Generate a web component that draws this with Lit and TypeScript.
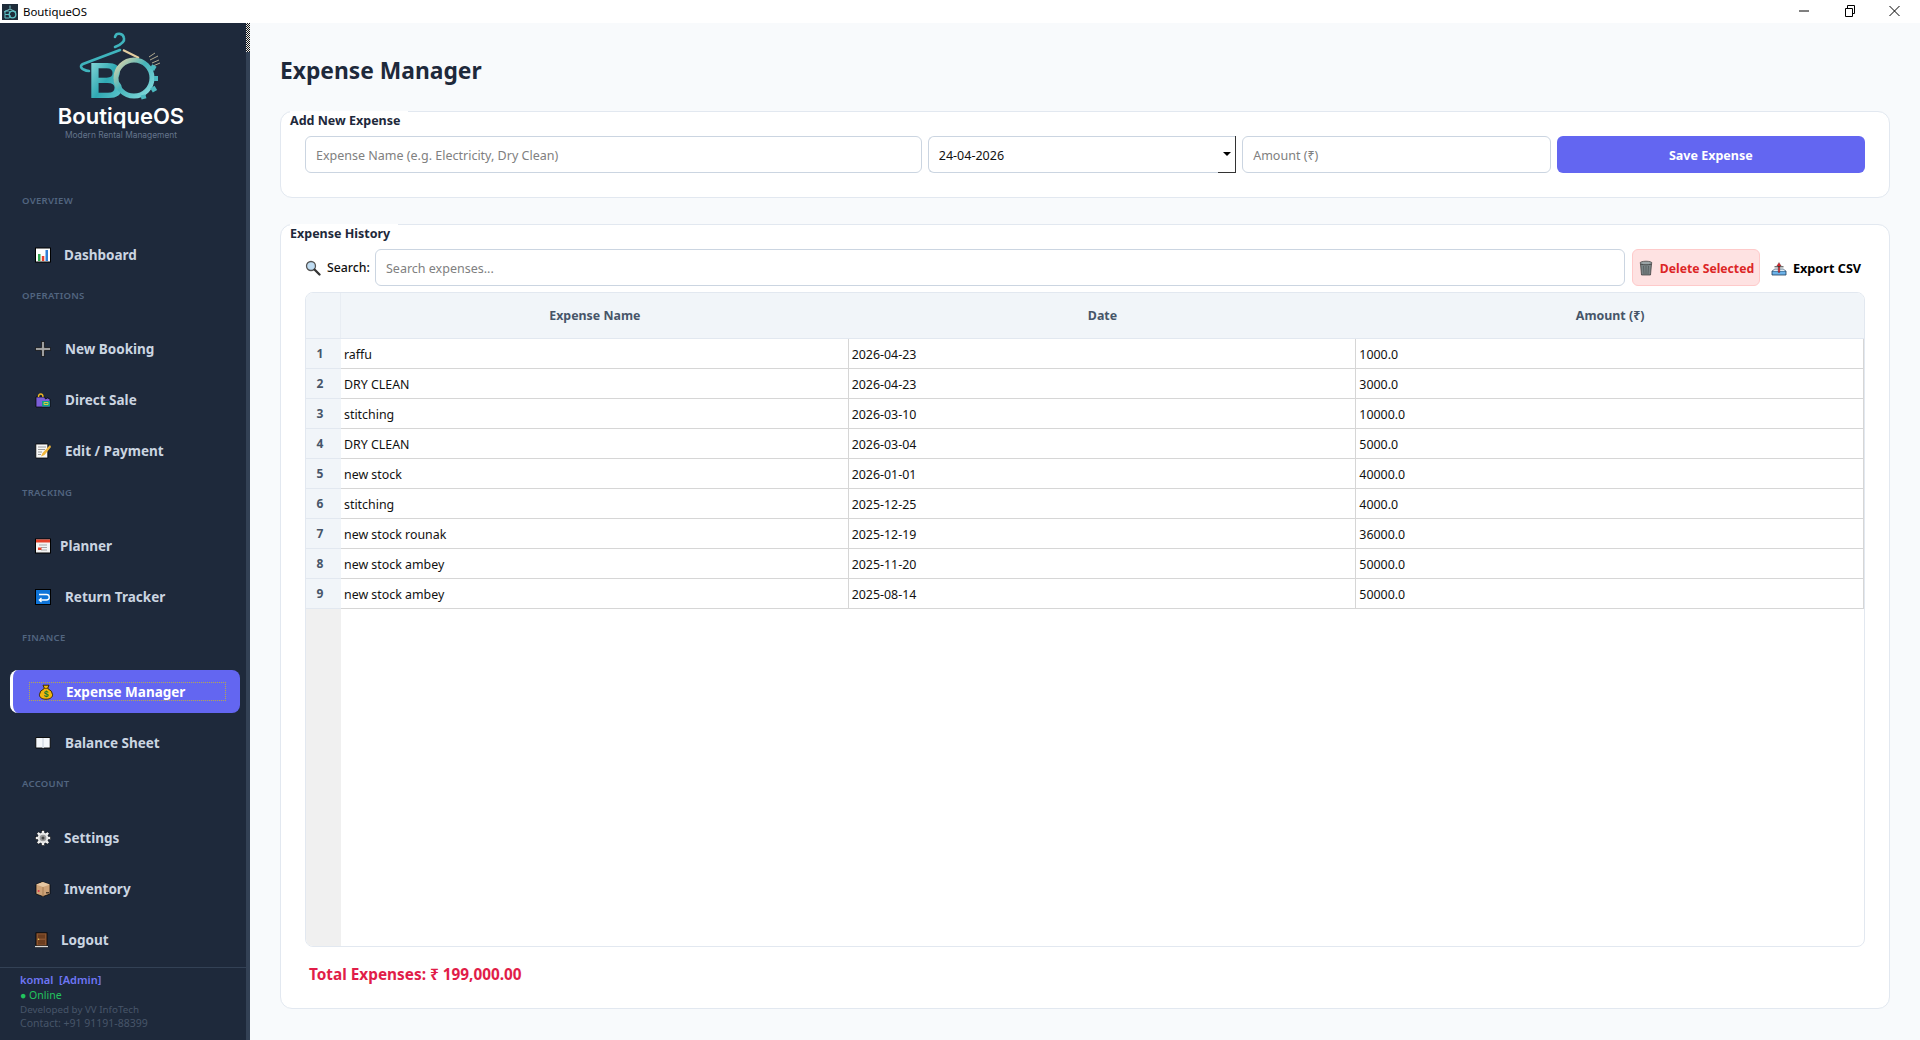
import { LitElement, css, html, svg } from "lit";
import { customElement } from "lit/decorators.js";

const icons: Record<string, unknown> = {
  chart: svg`<rect x=".5" y="1" width="15" height="14" fill="#fff" stroke="#000"/><rect x="3" y="7" width="2.5" height="7" fill="#2fa84f"/><rect x="6.8" y="9" width="2.5" height="5" fill="#e5432d"/><rect x="10.5" y="3" width="2.5" height="11" fill="#2f7fd6"/>`,
  plus: svg`<path d="M6.500.5h3v6h6v3h-6v6h-3v-6h-6v-3h6z" fill="#8f8f8f" stroke="#000" stroke-width=".6"/><path d="M1 8h14M8 1v14" stroke="#b5b5b5" stroke-width=".8"/>`,
  bag: svg`<path d="M1 5h8.500l1 2 2-1 2.500 1v8H1z" fill="#7b5fd8" stroke="#000" stroke-width=".7"/><path d="M3.500 5C3.500 1 8 1 8 5" fill="none" stroke="#e8b321" stroke-width="1.400"/><rect x="7" y="9" width="8" height="5.500" fill="#0f9d8a"/><path d="M9 10.500h4v2H9z" fill="none" stroke="#e6d23b" stroke-width=".9"/>`,
  memo: svg`<path d="M.8 1h12v14H.8z" fill="#f7f7f7" stroke="#000" stroke-width=".8"/><path d="M3 4h8M3 6.500h7M3 9h4M3 11.500h3" stroke="#9a9a9a" stroke-width="1"/><path d="M15 2 7.500 10l-1.500 3.500L9.500 12 16 4z" fill="#f0b63c"/>`,
  calendar: svg`<rect x=".5" y="1" width="15" height="14" fill="#f4f4f4" stroke="#000"/><rect x="1" y="1.500" width="14" height="3" fill="#e5402a"/><path d="M4 7h8M6 9.500h6M6 12h6" stroke="#a8a8a8"/><rect x="3" y="9.500" width="3.500" height="2.500" fill="#e5402a"/>`,
  ret: svg`<rect x=".5" y=".5" width="15" height="15" fill="#0f74d8" stroke="#000"/><path d="M4 5.500h7.500a2.500 2.500 0 0 1 0 5.500H4.500M6.500 9 4.300 11l2.200 2" fill="none" stroke="#fff" stroke-width="1.300"/>`,
  money: svg`<path d="M5 1.200h6l-1.400 3.200q5 2.500 5 6.300c0 3-3 4.500-6.600 4.500S1.400 13.700 1.400 10.700q0-3.800 5-6.300z" fill="#f2b70f" stroke="#2b1d00" stroke-width=".9"/><path d="M5.500 4.400h5" stroke="#7a5200" stroke-width="1"/><text x="8" y="13.200" text-anchor="middle" font-size="8.500" font-weight="700" font-family="Liberation Sans, sans-serif" fill="#157a2c">$</text>`,
  book: svg`<path d="M.8 2.500h14.400v10.500H8.800l-.8.800-.8-.8H.8z" fill="#f3f6fa" stroke="#000" stroke-width=".9"/><path d="M8 3v10" stroke="#b8c4d0" stroke-width=".8"/>`,
  gear: svg`<g transform="translate(8 8)"><g fill="#f2f2f2" stroke="#000" stroke-width=".5"><rect x="-1.500" y="-7.500" width="3" height="15"/><rect x="-1.500" y="-7.500" width="3" height="15" transform="rotate(45)"/><rect x="-1.500" y="-7.500" width="3" height="15" transform="rotate(90)"/><rect x="-1.500" y="-7.500" width="3" height="15" transform="rotate(135)"/></g><circle r="5.400" fill="#e6e6e6"/><circle r="3.300" fill="#9a9a9a"/><circle r="1.500" fill="#444"/></g>`,
  box: svg`<path d="M1 3.500 7 .8l8 2.700v9.500l-7 2.500L1 13z" fill="#cda277" stroke="#000" stroke-width=".7"/><path d="M1 3.500 8 6l7-2.500L8 1z" fill="#e6c7a2"/><path d="M8 6v9.500" stroke="#a67c52"/><circle cx="3.600" cy="10" r="1" fill="#e0364a"/><rect x="11" y="11" width="3" height="1.500" fill="#4a3a2a"/>`,
  door: svg`<rect x="1" y=".8" width="11" height="13.400" fill="#8a5430" stroke="#000" stroke-width=".8"/><rect x="3" y="2.500" width="7" height="4" fill="#6b3d1f"/><rect x="3" y="8" width="7" height="4.500" fill="#6b3d1f"/><circle cx="3.500" cy="7.300" r=".8" fill="#f0cf5a"/><rect x="0" y="13.800" width="13" height="1.600" fill="#d8d8d8" stroke="#000" stroke-width=".4"/>`,
  search: svg`<circle cx="6" cy="6" r="4.500" fill="#bfdcf2" stroke="#555" stroke-width="1.300"/><path d="m9.500 9.500 5 5" stroke="#333" stroke-width="2.300" stroke-linecap="round"/>`,
  trash: svg`<path d="M2.500 4h11l-1 11h-9z" fill="#7a8486" stroke="#333" stroke-width=".7"/><ellipse cx="8" cy="3" rx="6" ry="1.800" fill="#9aa4a6" stroke="#333" stroke-width=".7"/><path d="M5.500 6l.5 8M8 6v8M10.500 6l-.5 8" stroke="#4a5355" stroke-width=".7"/>`,
  export: svg`<path d="M1 11h14v4H1z" fill="#6cb2e8" stroke="#1d3d5c" stroke-width=".8"/><path d="M1.500 11 3.500 9h9l2 2" fill="#dfeaf2" stroke="#1d3d5c" stroke-width=".6"/><path d="M8 2.500 5.800 6H7.200v6.500h1.600V6h1.400z" fill="#e1262d" stroke="#222" stroke-width=".3"/><path d="M3.500 6.800h9" stroke="#222" stroke-width=".9"/>`,
};

const icon = (name: string) => html`<svg class="ico" viewBox="0 0 16 16">${icons[name]}</svg>`;

const nav = [
  { label: "OVERVIEW", items: [{ text: "Dashboard", icon: "chart", gap: 13 }] },
  {
    label: "OPERATIONS",
    items: [
      { text: "New Booking", icon: "plus", gap: 14 },
      { text: "Direct Sale", icon: "bag", gap: 14 },
      { text: "Edit / Payment", icon: "memo", gap: 14 },
    ],
  },
  {
    label: "TRACKING",
    items: [
      { text: "Planner", icon: "calendar", gap: 9 },
      { text: "Return Tracker", icon: "ret", gap: 14 },
    ],
  },
  {
    label: "FINANCE",
    items: [
      { text: "Expense Manager", icon: "money", gap: 12, active: true },
      { text: "Balance Sheet", icon: "book", gap: 14 },
    ],
  },
  {
    label: "ACCOUNT",
    items: [
      { text: "Settings", icon: "gear", gap: 13 },
      { text: "Inventory", icon: "box", gap: 13 },
      { text: "Logout", icon: "door", gap: 10 },
    ],
  },
];

const rows = [
  ["raffu", "2026-04-23", "1000.0"],
  ["DRY CLEAN", "2026-04-23", "3000.0"],
  ["stitching", "2026-03-10", "10000.0"],
  ["DRY CLEAN", "2026-03-04", "5000.0"],
  ["new stock", "2026-01-01", "40000.0"],
  ["stitching", "2025-12-25", "4000.0"],
  ["new stock rounak", "2025-12-19", "36000.0"],
  ["new stock ambey", "2025-11-20", "50000.0"],
  ["new stock ambey", "2025-08-14", "50000.0"],
];

@customElement("app-root")
export class AppRoot extends LitElement {
  static styles = css`
    :host {
      display: flex;
      flex-direction: column;
      height: 1040px;
      font-family: "Noto Sans", "Open Sans", sans-serif;
      color: #0f172a;
      background: #f8fafc;
      overflow: hidden;
    }
    .ico {
      width: 16px;
      height: 16px;
      flex: none;
    }

    .titlebar {
      height: 23px;
      flex: none;
      background: #fff;
      display: flex;
      align-items: center;
      font-size: 11.400px;
      color: #000;
      padding-left: 2px;
    }
    .app-icon {
      width: 16px;
      height: 16px;
      margin-right: 5px;
      flex: none;
    }
    .win {
      margin-left: auto;
      display: flex;
      padding-right: 3px;
    }
    .win svg {
      width: 45px;
      height: 20px;
      display: block;
    }

    .body {
      flex: 1;
      display: flex;
      min-height: 0;
    }

    .sidebar {
      width: 250px;
      flex: none;
      display: flex;
      background: #1e293b;
    }
    .side-col {
      width: 246px;
      display: flex;
      flex-direction: column;
    }
    .scroll {
      width: 4px;
      background: #334155;
    }
    .scroll div {
      height: 29px;
      background: repeating-conic-gradient(#111 0 25%, #eee 0 50%) 0 0 / 2px 2px;
    }

    .brand {
      height: 168px;
      flex: none;
      display: flex;
      flex-direction: column;
      align-items: center;
    }
    .logo {
      width: 90px;
      height: 82px;
      margin: 7px 6px -7px 0;
      display: block;
    }
    .brand-name {
      font-family: Inter, sans-serif;
      font-weight: 600;
      font-size: 22px;
      line-height: 16px;
      color: #fff;
      margin: 3px 4px 0 0;
    }
    .brand-tag {
      font-family: Inter, sans-serif;
      font-size: 8.400px;
      line-height: 11px;
      color: #64748b;
      margin: 6px 4px 0 0;
    }

    .section + .section {
      margin-top: 9.750px;
    }
    .section-label {
      height: 20px;
      line-height: 20px;
      font-size: 9.500px;
      font-weight: 600;
      letter-spacing: 0.3px;
      color: #526580;
      padding-left: 22px;
      margin-bottom: 22px;
    }
    .items {
      display: flex;
      flex-direction: column;
      gap: 8px;
    }
    .item {
      position: relative;
      height: 43px;
      margin: 0 6px 0 10px;
      padding-left: 25px;
      display: flex;
      align-items: center;
      box-sizing: border-box;
      font-size: 13.500px;
      font-weight: 700;
      color: #cbd5e1;
      border-radius: 8px;
    }
    .item.active {
      background: #6366f1;
      color: #fff;
      border-left: 3px solid #fff;
      padding-left: 25px;
    }
    .item.active::after {
      content: "";
      position: absolute;
      left: 16px;
      right: 14px;
      top: 12px;
      bottom: 12px;
      border: 1px dotted #b7a94e;
    }

    .foot {
      margin-top: auto;
      height: 73px;
      flex: none;
      box-sizing: border-box;
      border-top: 1px solid #334155;
      padding: 4px 0 0 20px;
      font-size: 10.500px;
      line-height: 15px;
      color: #475569;
    }
    .foot .user {
      font-size: 11px;
      line-height: 16px;
      color: #6f76f5;
      font-weight: 600;
      white-space: pre;
    }
    .foot .online {
      color: #22c55e;
    }
    .foot .dev {
      font-size: 9.800px;
      line-height: 14px;
    }
    .foot .contact {
      font-size: 10.500px;
      line-height: 13px;
    }

    .main {
      flex: 1;
      min-width: 0;
      box-sizing: border-box;
      padding: 32px 30px 31px;
      display: flex;
      flex-direction: column;
    }
    h1 {
      margin: 0 0 24px;
      height: 32px;
      line-height: 32px;
      font-size: 22.800px;
      font-weight: 700;
      color: #1e293b;
    }
    .card {
      background: #fff;
      border: 1px solid #e2e8f0;
      border-radius: 12px;
      padding: 0 24px;
      display: flex;
      flex-direction: column;
    }
    .card + .card {
      margin-top: 26px;
      flex: 1;
      min-height: 0;
    }
    .legend {
      align-self: flex-start;
      margin: -1px 0 7px -15px;
      height: 18px;
      line-height: 19px;
      padding: 0 8px 0 0;
      background: #fff;
      font-size: 12.500px;
      font-weight: 700;
      color: #1e293b;
    }
    .add-row {
      display: grid;
      grid-template-columns: 2fr 1fr 1fr 1fr;
      gap: 6px;
      height: 37px;
      margin-bottom: 24px;
    }
    input {
      box-sizing: border-box;
      width: 100%;
      height: 100%;
      border: 1px solid #cbd5e1;
      border-radius: 6px;
      background: #fff;
      padding: 2px 10px 0;
      font: 12.500px "Noto Sans", sans-serif;
      color: #111;
      outline: none;
    }
    input::placeholder {
      color: #808080;
      opacity: 1;
    }
    .date {
      position: relative;
    }
    .date input {
      border-radius: 6px 0 0 6px;
      border-right-color: #222;
      border-bottom-color: #cbd5e1;
    }
    .date-btn {
      position: absolute;
      right: 0;
      top: 0;
      bottom: 0;
      width: 18px;
      border-right: 1px solid #333;
      border-bottom: 1px solid #333;
      box-sizing: border-box;
      display: flex;
      align-items: center;
      justify-content: center;
    }
    .date-btn::before {
      content: "";
      border: 4px solid transparent;
      border-top: 4px solid #000;
      margin-top: 4px;
    }
    .save {
      border: 0;
      border-radius: 6px;
      background: #6366f1;
      color: #fff;
      padding-top: 2px;
      font: 700 12.500px "Noto Sans", sans-serif;
    }

    .search-row {
      display: flex;
      align-items: center;
      height: 37px;
      flex: none;
      margin-bottom: 6px;
    }
    .search-lab {
      display: flex;
      align-items: center;
      gap: 6px;
      font-size: 12.300px;
      font-weight: 500;
      width: 70px;
      flex: none;
      color: #111;
    }
    .search-box {
      flex: 1;
      height: 100%;
    }
    .del {
      margin-left: 7px;
      height: 100%;
      width: 128px;
      box-sizing: border-box;
      flex: none;
      border: 1px solid #fecaca;
      border-radius: 6px;
      background: #fee2e2;
      color: #dc2626;
      font-size: 12.200px;
      font-weight: 700;
      display: flex;
      align-items: center;
      justify-content: center;
      gap: 6px;
    }
    .del span {
      padding-top: 1px;
    }
    .exp {
      width: 105px;
      box-sizing: border-box;
      padding-left: 7px;
      flex: none;
      display: flex;
      align-items: center;
      justify-content: center;
      gap: 6px;
      font-size: 12.700px;
      font-weight: 700;
      color: #000;
    }

    .table {
      flex: 1;
      min-height: 0;
      display: flex;
      flex-direction: column;
      border: 1px solid #e2e8f0;
      border-radius: 8px;
      overflow: hidden;
      background: #fff;
    }
    .tr {
      display: grid;
      grid-template-columns: 35px 1fr 1fr 1fr;
      flex: none;
      height: 30px;
    }
    .tr.head {
      height: 46px;
      background: #f1f5f9;
      border-bottom: 1px solid #e2e8f0;
      box-sizing: border-box;
    }
    .th {
      display: flex;
      align-items: center;
      justify-content: center;
      font-size: 12.400px;
      font-weight: 700;
      color: #475569;
    }
    .th.corner {
      border-right: 1px solid #e8edf3;
    }
    .num {
      background: #f1f5f9;
      box-sizing: border-box;
      padding-right: 7px;
      display: flex;
      align-items: center;
      justify-content: center;
      font-size: 12px;
      font-weight: 700;
      color: #475569;
      border-bottom: 1px solid #e2e8f0;
    }
    .td {
      display: flex;
      align-items: center;
      padding: 1px 0 0 3px;
      font-size: 12.400px;
      color: #111;
      border-right: 1px solid #d6d6d6;
      border-bottom: 1px solid #d6d6d6;
      box-sizing: border-box;
    }
    .filler {
      flex: 1;
      display: flex;
    }
    .filler div {
      width: 35px;
      background: #f0f0f0;
    }
    .total {
      flex: none;
      height: 22px;
      line-height: 22px;
      margin: 16px 0 23px 4px;
      font-size: 15.350px;
      font-weight: 700;
      color: #e11d48;
    }
  `;

  renderLogo() {
    return html`<svg class="logo" viewBox="76 30 90 82">
      <defs>
        <linearGradient id="teal" x1="0" y1="0" x2="1" y2="1">
          <stop offset="0" stop-color="#9fe4e2" />
          <stop offset="0.5" stop-color="#2fa9b3" />
          <stop offset="1" stop-color="#6fd0d4" />
        </linearGradient>
        <linearGradient id="ring" x1="0" y1="0" x2="1" y2="1">
          <stop offset="0" stop-color="#e9d6a8" />
          <stop offset="0.45" stop-color="#45b4ba" />
          <stop offset="1" stop-color="#8adde0" />
        </linearGradient>
      </defs>
      <path
        d="M116 47c5-2 10-5 9-9-1-5-8-6-9-1M121 50 84 64c-4 2-2 6 6 7"
        fill="none"
        stroke="#3fb4bd"
        stroke-width="2.600"
        stroke-linecap="round"
      />
      <path d="M124 50l16 8" stroke="#e3cda0" stroke-width="2" />
      <path
        d="M150 57l6-4M151 60l8-4M153 63l7-3M154 66l7-3"
        stroke="#d8cca6"
        stroke-width="0.800"
      />
      <text
        x="89"
        y="98"
        font-family="Liberation Sans, sans-serif"
        font-weight="700"
        font-size="50"
        fill="url(#teal)"
      >B</text>
      <circle cx="135" cy="78" r="18" fill="none" stroke="url(#ring)" stroke-width="5" />
      <g fill="#4cb9c0">
        <rect x="152" y="65" width="5" height="5" transform="rotate(30 154 67)" />
        <rect x="155" y="76" width="4" height="5" />
        <rect x="152" y="87" width="5" height="5" transform="rotate(-30 154 89)" />
        <rect x="142" y="95" width="5" height="4" transform="rotate(-15 144 97)" />
      </g>
    </svg>`;
  }

  renderSidebar() {
    return html`<aside class="sidebar">
      <div class="side-col">
        <div class="brand">
          ${this.renderLogo()}
          <div class="brand-name">BoutiqueOS</div>
          <div class="brand-tag">Modern Rental Management</div>
        </div>
        ${nav.map(
          (s) => html`<div class="section">
            <div class="section-label">${s.label}</div>
            <div class="items">
              ${s.items.map(
                (i) => html`<div class="item ${i.active ? "active" : ""}" style="gap:${i.gap}px">
                  ${icon(i.icon)}<span>${i.text}</span>
                </div>`
              )}
            </div>
          </div>`
        )}
        <div class="foot">
          <div class="user">komal  [Admin]</div>
          <div class="online">● Online</div>
          <div class="dev">Developed by VV InfoTech</div>
          <div class="contact">Contact: +91 91191-88399</div>
        </div>
      </div>
      <div class="scroll"><div></div></div>
    </aside>`;
  }

  render() {
    return html`
      <div class="titlebar">
        <svg class="app-icon" viewBox="0 0 16 16">
          <rect width="16" height="16" fill="#1e2c3a" />
          <path d="M8 1.500v3M2 8l6-3 6 3" stroke="#7bc4c8" fill="none" />
          <circle cx="10.500" cy="10.500" r="3.300" fill="none" stroke="#5cc0c4" stroke-width="1.300" />
          <path d="M3 7h3.500a1.800 1.800 0 0 1 0 3.500H3zM3 10.500h4a1.800 1.800 0 0 1 0 3.500H3z" fill="none" stroke="#5cc0c4" />
        </svg>
        BoutiqueOS
        <div class="win">
          <svg viewBox="0 0 45 20"><path d="M17 9h10" stroke="#000" /></svg>
          <svg viewBox="0 0 45 20"><path d="M18.500 6.500h7v8h-7zM20.500 6.500v-3h7v8h-2" fill="none" stroke="#000" /></svg>
          <svg viewBox="0 0 45 20"><path d="M17.500 4l10 10M27.500 4l-10 10" stroke="#000" /></svg>
        </div>
      </div>
      <div class="body">
        ${this.renderSidebar()}
        <main class="main">
          <h1>Expense Manager</h1>

          <section class="card">
            <div class="legend">Add New Expense</div>
            <div class="add-row">
              <input placeholder="Expense Name (e.g. Electricity, Dry Clean)" />
              <div class="date">
                <input value="24-04-2026" />
                <div class="date-btn"></div>
              </div>
              <input placeholder="Amount (₹)" />
              <button class="save">Save Expense</button>
            </div>
          </section>

          <section class="card">
            <div class="legend">Expense History</div>
            <div class="search-row">
              <div class="search-lab">${icon("search")}<span>Search:</span></div>
              <div class="search-box"><input placeholder="Search expenses..." /></div>
              <div class="del">${icon("trash")}<span>Delete Selected</span></div>
              <div class="exp">${icon("export")}<span>Export CSV</span></div>
            </div>
            <div class="table">
              <div class="tr head">
                <div class="th corner"></div>
                <div class="th">Expense Name</div>
                <div class="th">Date</div>
                <div class="th">Amount (₹)</div>
              </div>
              ${rows.map(
                (r, n) => html`<div class="tr">
                  <div class="num">${n + 1}</div>
                  ${r.map((c) => html`<div class="td">${c}</div>`)}
                </div>`
              )}
              <div class="filler"><div></div></div>
            </div>
            <div class="total">Total Expenses: ₹ 199,000.00</div>
          </section>
        </main>
      </div>
    `;
  }
}
